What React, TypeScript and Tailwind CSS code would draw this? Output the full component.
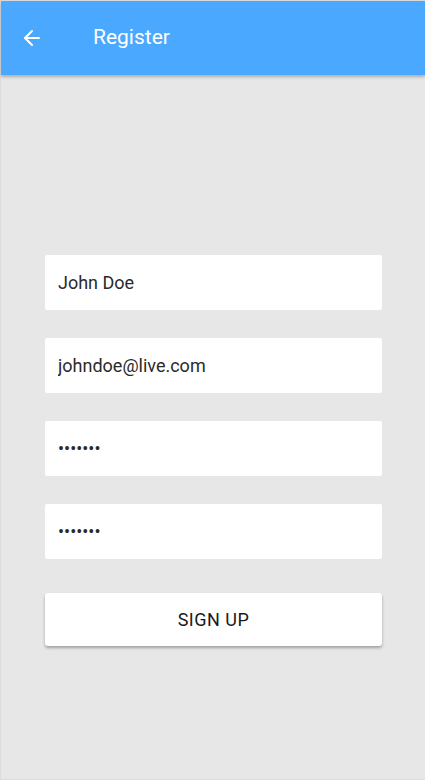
import { ArrowLeft } from 'lucide-react';

const fields = [
  { type: 'text', value: 'John Doe' },
  { type: 'email', value: 'johndoe@live.com' },
  { type: 'password', value: 'secret1' },
  { type: 'password', value: 'secret1' },
];

export default function App() {
  return (
    <div className="h-[780px] w-full border border-r-0 border-[#dcdcdc] bg-[#e7e7e7] flex flex-col" style={{ fontFamily: 'Roboto, "Noto Sans", sans-serif' }}>
      <header className="h-[74px] bg-[#4aa8ff] flex items-center shadow-[0_2px_3px_rgba(0,0,0,0.25)] relative z-10">
        <button className="ml-[19px] w-[24px] h-[24px] flex items-center justify-center text-white">
          <ArrowLeft className="w-[24px] h-[24px]" strokeWidth={2} />
        </button>
        <h1 className="ml-[49px] text-[21px] text-white font-normal">Register</h1>
      </header>

      <form className="mt-[180px] mx-[44px] w-[337px] flex flex-col gap-[28px]">
        {fields.map((f, i) => (
          <input
            key={i}
            type={f.type}
            defaultValue={f.value}
            readOnly
            className="h-[55px] w-full bg-white rounded-[2px] px-[13px] text-[18px] text-[#2a2a2a] outline-none"
          />
        ))}
        <button
          type="button"
          className="mt-[6px] h-[53px] w-full bg-white rounded-[3px] text-[18px] text-[#1a1a1a] tracking-[0.5px] shadow-[0_2px_3px_rgba(0,0,0,0.3)]"
        >
          SIGN UP
        </button>
      </form>
    </div>
  );
}
